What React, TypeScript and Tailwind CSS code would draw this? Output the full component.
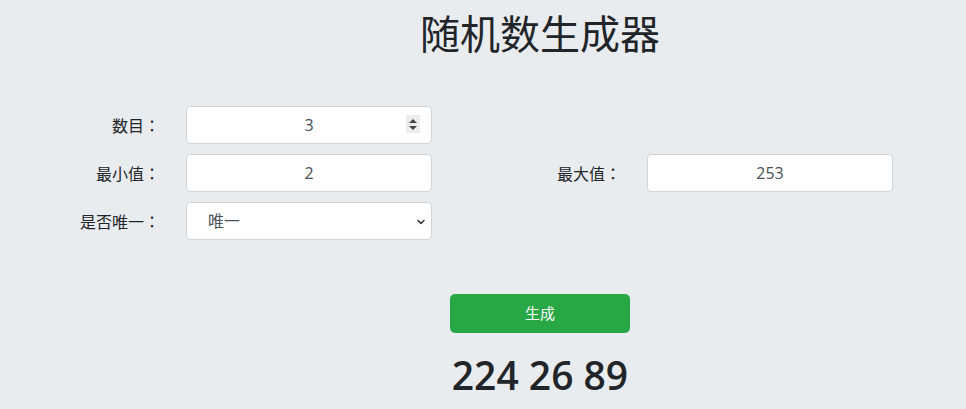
import { ChevronDown } from "lucide-react";

const font = "font-['Open_Sans','Noto_Sans_CJK_SC',sans-serif]";

function Label({ text, w }: { text: string; w: string }) {
  return (
    <div className={`${w} shrink-0 text-right text-[16px] text-[#212529] font-['Noto_Sans_CJK_JP',sans-serif]`}>
      {text}
    </div>
  );
}

export default function App() {
  return (
    <div className={`min-h-[409px] bg-[#e9ecef] ${font}`}>
      <h1 className="pt-[8px] pl-[114px] text-center text-[40px] leading-[48px] font-normal text-[#212529] font-['Noto_Sans_CJK_SC',sans-serif]">
        随机数生成器
      </h1>

      <div className="mt-[50px] flex flex-col gap-[10px]">
        <div className="flex items-center">
          <Label text="数目：" w="w-[160px]" />
          <div className="relative ml-[26px] w-[246px]">
            <input
              type="text"
              defaultValue="3"
              className="h-[38px] w-full rounded-[4px] border border-[#ced4da] bg-white text-center text-[16px] text-[#495057] outline-none"
            />
            <div className="absolute right-[12px] top-[9px] flex h-[18px] w-[14px] flex-col items-center justify-center gap-[3px] bg-[#ececec]">
              <svg width="8" height="4" viewBox="0 0 8 4"><path d="M0 4 L4 0 L8 4 Z" fill="#444" /></svg>
              <svg width="8" height="4" viewBox="0 0 8 4"><path d="M0 0 L4 4 L8 0 Z" fill="#444" /></svg>
            </div>
          </div>
        </div>

        <div className="flex items-center">
          <Label text="最小值：" w="w-[160px]" />
          <input
            type="text"
            defaultValue="2"
            className="ml-[26px] h-[38px] w-[246px] rounded-[4px] border border-[#ced4da] bg-white text-center text-[16px] text-[#495057] outline-none"
          />
          <Label text="最大值：" w="w-[189px]" />
          <input
            type="text"
            defaultValue="253"
            className="ml-[26px] h-[38px] w-[246px] rounded-[4px] border border-[#ced4da] bg-white text-center text-[16px] text-[#495057] outline-none"
          />
        </div>

        <div className="flex items-center">
          <Label text="是否唯一：" w="w-[160px]" />
          <div className="relative ml-[26px] w-[246px]">
            <select className="h-[38px] w-full appearance-none rounded-[4px] border border-[#ced4da] bg-white pl-[21px] text-[16px] text-[#495057] outline-none">
              <option>唯一</option>
              <option>不唯一</option>
            </select>
            <ChevronDown className="pointer-events-none absolute right-[5px] top-[14px] h-[12px] w-[12px] text-[#333]" strokeWidth={3} />
          </div>
        </div>
      </div>

      <div className="mt-[54px] flex flex-col items-center pl-[114px]">
        <button className="h-[39px] w-[180px] rounded-[5px] bg-[#28a745] text-[15px] text-white">
          生成
        </button>
        <div className="mt-[18px] text-[39px] leading-[48px] font-semibold text-[#212529]">
          224 26 89
        </div>
      </div>
    </div>
  );
}
